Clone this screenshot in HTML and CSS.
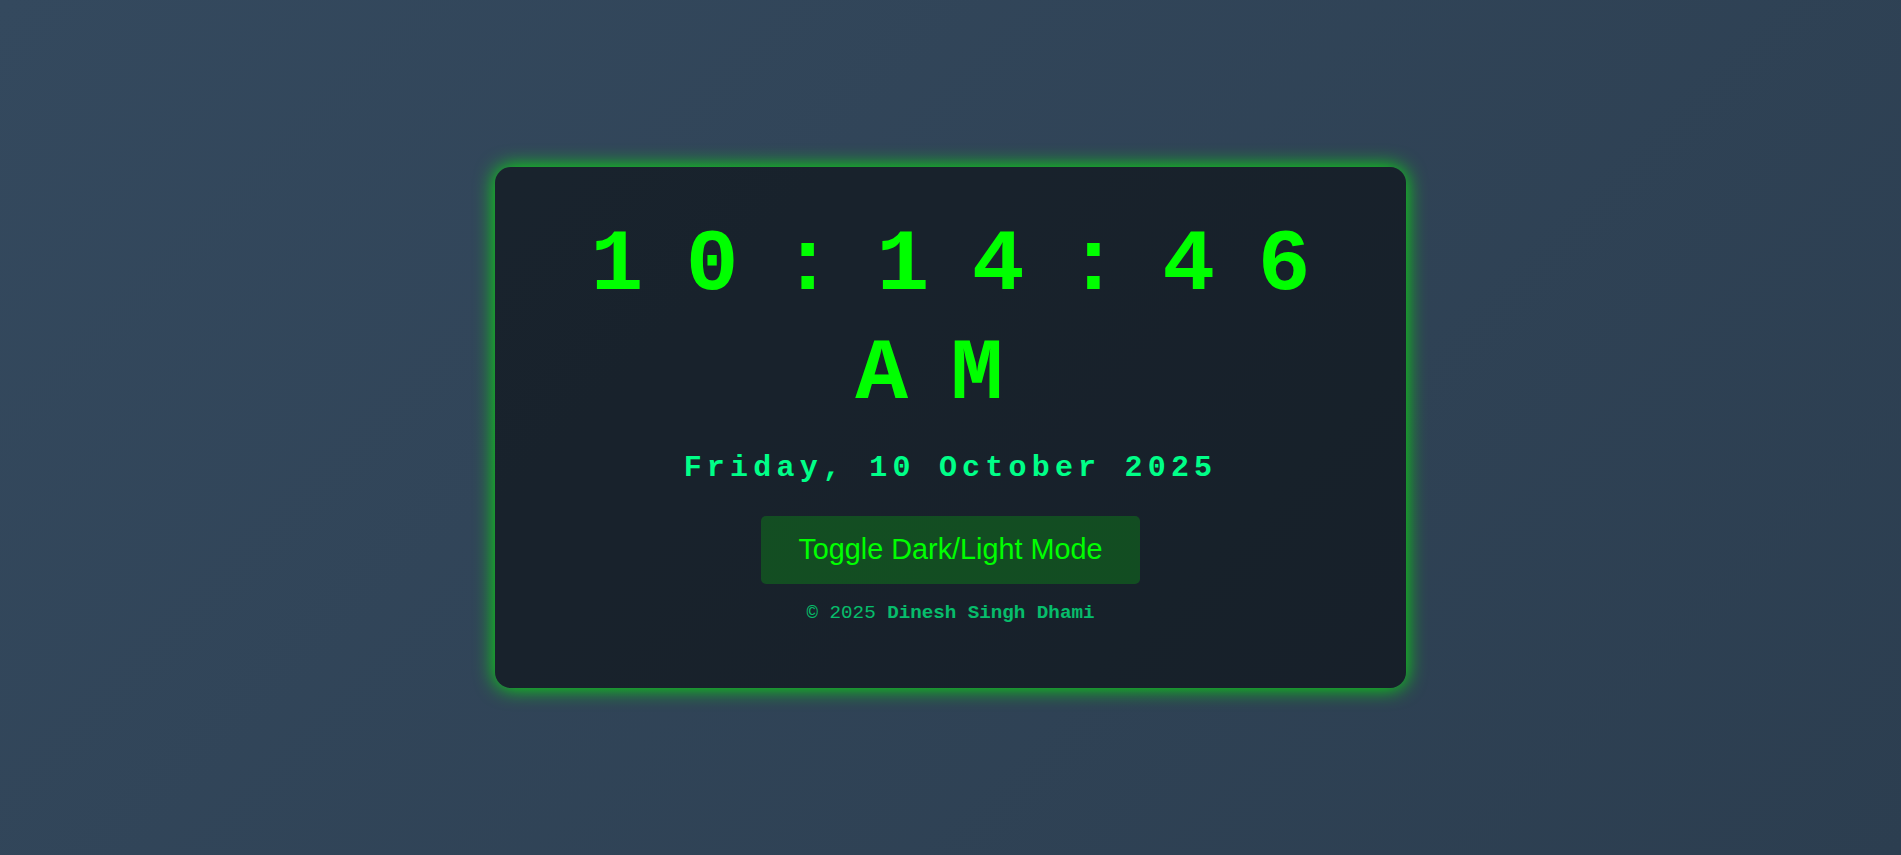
FILE: index.html
```html
<!DOCTYPE html>
<html lang="en">
<head>
<meta charset="UTF-8">
<title>Digital Clock</title>
<link rel="stylesheet" href="styles.css">
</head>
<body>
  <main class="card">
    <div class="time"><span class="hms">10:14:46</span> <span class="ampm">AM</span></div>
    <div class="date">Friday, 10 October 2025</div>
    <button class="toggle" type="button">Toggle Dark/Light Mode</button>
    <p class="footer">© 2025 <strong class="author">Dinesh Singh Dhami</strong></p>
  </main>
</body>
</html>
```

FILE: styles.css
```css
* {
  box-sizing: border-box;
}

html, body {
  margin: 0;
  padding: 0;
}

body {
  min-height: 100vh;
  display: flex;
  align-items: center;
  justify-content: center;
  background: linear-gradient(135deg, #34495e, #2c3e50);
  font-family: "Liberation Mono", "Courier New", monospace;
}

.card {
  width: 911px;
  padding: 45px 40px 64.5px;
  border-radius: 16px;
  background: rgba(0, 0, 0, 0.5);
  box-shadow: 0 0 20px rgba(0, 255, 0, 0.9);
  text-align: center;
  display: flex;
  flex-direction: column;
  align-items: center;
}

.time {
  width: 100%;
  font-size: 88px;
  font-weight: bold;
  letter-spacing: 42.5px;
  color: #00ff00;
  line-height: 108.75px;
}

.hms {
  margin-right: -42.5px;
}

.date {
  margin-top: 20.5px;
  font-size: 30px;
  font-weight: bold;
  letter-spacing: 5.2px;
  color: #00ff88;
  line-height: 36.25px;
}

.toggle {
  margin-top: 30px;
  padding: 0.6em 1.3em;
  font-family: "Liberation Sans", Arial, sans-serif;
  font-size: 28.8px;
  line-height: normal;
  color: #00ff00;
  background: rgba(0, 255, 0, 0.2);
  border: none;
  border-radius: 5px;
  cursor: pointer;
}

.footer {
  margin: 18px 0 0;
  font-size: 19.2px;
  line-height: normal;
  color: #00ff88;
  opacity: 0.7;
}

.author {
  font-weight: bold;
}
```
